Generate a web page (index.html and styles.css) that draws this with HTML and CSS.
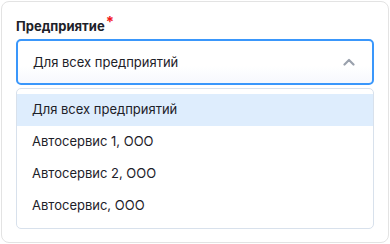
FILE: index.html
```html
<!DOCTYPE html>
<html lang="ru">
<head>
    <meta charset="UTF-8">
    <meta name="viewport" content="width=device-width, initial-scale=1.0">
    <title>Предприятие</title>
    <link rel="stylesheet" href="styles.css">
</head>
<body>
    <div class="card">
        <label class="field-label">Предприятие<span class="required">*</span></label>

        <div class="select open">
            <span class="select-value">Для всех предприятий</span>
            <svg class="chevron" viewBox="0 0 12 8" fill="none" stroke="currentColor" stroke-width="2.2" stroke-linecap="round" stroke-linejoin="round">
                <polyline points="1.5 6.5 6 2 10.5 6.5"></polyline>
            </svg>
        </div>

        <ul class="options">
            <li class="option active">Для всех предприятий</li>
            <li class="option">Автосервис 1, ООО</li>
            <li class="option">Автосервис 2, ООО</li>
            <li class="option">Автосервис, ООО</li>
        </ul>
    </div>
</body>
</html>
```

FILE: styles.css
```css
* {
    margin: 0;
    padding: 0;
    box-sizing: border-box;
    font-family: Inter, 'Open Sans', 'Liberation Sans', sans-serif;
}

body {
    background: #ffffff;
    padding: 1px 2px 2px 1px;
}

.card {
    width: 388px;
    height: 242px;
    background: #fff;
    border: 1px solid #e3e3e3;
    border-radius: 8px;
    padding: 14px 14px 0 14px;
}

.field-label {
    display: block;
    font-size: 13px;
    font-weight: 700;
    line-height: 20px;
    color: #1d2129;
    margin-bottom: 3px;
}

.required {
    color: #f2161b;
    font-size: 15px;
    position: relative;
    top: -4px;
    margin-left: 1px;
}

.select {
    display: flex;
    align-items: center;
    justify-content: space-between;
    height: 46px;
    padding: 0 17px 0 15px;
    border: 2px solid #3a97fb;
    border-radius: 5px;
    background: linear-gradient(#ffffff 60%, #f6f8fd);
}

.select-value {
    font-size: 13px;
    color: #1d2129;
}

.chevron {
    width: 12px;
    height: 8px;
    color: #9aa1ad;
}

.options {
    list-style: none;
    margin-top: 3px;
    padding: 5px 0 6px;
    border: 1px solid #d8e1ec;
    border-radius: 5px;
    background: #fff;
}

.option {
    height: 32px;
    line-height: 31px;
    padding-left: 15px;
    font-size: 13px;
    color: #1d2129;
}

.option.active {
    background: #deedfd;
}
```
